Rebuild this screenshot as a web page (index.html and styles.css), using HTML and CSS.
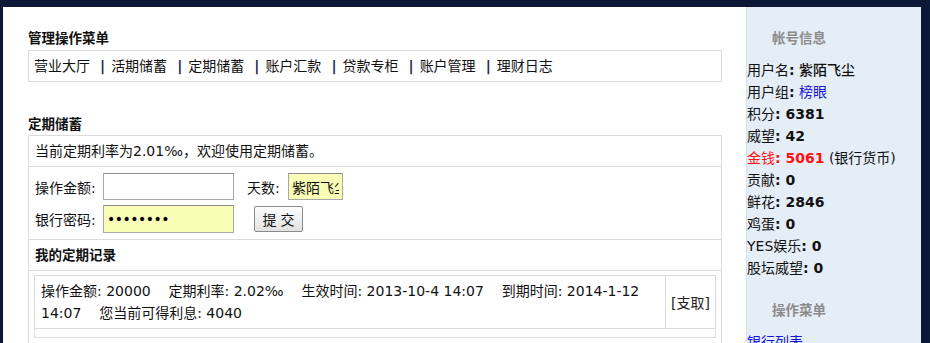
FILE: index.html
```html
<!DOCTYPE html>
<html lang="zh-CN">
<head>
<meta charset="utf-8">
<title>定期储蓄</title>
<link rel="stylesheet" href="styles.css">
</head>
<body>
<div class="page">
  <div class="main">
    <h3 class="title">管理操作菜单</h3>
    <div class="menu">
      <a>营业大厅</a><span class="sep">|</span><a>活期储蓄</a><span class="sep">|</span><a>定期储蓄</a><span class="sep">|</span><a>账户汇款</a><span class="sep">|</span><a>贷款专柜</a><span class="sep">|</span><a>账户管理</a><span class="sep">|</span><a>理财日志</a>
    </div>

    <h3 class="title title2">定期储蓄</h3>
    <div class="box">
      <div class="row notice">当前定期利率为2.01‰，欢迎使用定期储蓄。</div>
      <div class="row form">
        <div class="frow">
          <span class="lbl">操作金额:</span>
          <input class="inp" type="text" value="">
          <span class="lbl lbl2">天数:</span>
          <input class="inp inp-days yellow" type="text" value="紫陌飞尘">
        </div>
        <div class="frow frow2">
          <span class="lbl">银行密码:</span>
          <input class="inp yellow pwd" type="password" value="12345678">
          <button class="btn" type="button">提交</button>
        </div>
      </div>
      <div class="row rec-title">我的定期记录</div>
      <div class="row rec">
        <table class="rtable">
          <tr>
            <td class="rtext">操作金额: 20000&nbsp;&nbsp;&nbsp; 定期利率: 2.02‰&nbsp;&nbsp;&nbsp; 生效时间: 2013-10-4 14:07&nbsp;&nbsp;&nbsp; 到期时间: 2014-1-12 14:07&nbsp;&nbsp;&nbsp; 您当前可得利息: 4040</td>
            <td class="ract"><a>[支取]</a></td>
          </tr>
          <tr class="empty"><td colspan="2"></td></tr>
        </table>
      </div>
    </div>
  </div>

  <div class="side">
    <h4 class="stitle">帐号信息</h4>
    <ul class="info">
      <li>用户名<b>:</b> <span class="nm">紫陌飞尘</span></li>
      <li>用户组<b>:</b> <a class="link">榜眼</a></li>
      <li>积分<b>: 6381</b></li>
      <li>威望<b>: 42</b></li>
      <li class="red">金钱<b>: 5061</b> <span class="dark">(银行货币)</span></li>
      <li>贡献<b>: 0</b></li>
      <li>鲜花<b>: 2846</b></li>
      <li>鸡蛋<b>: 0</b></li>
      <li>YES娱乐<b>: 0</b></li>
      <li>股坛威望<b>: 0</b></li>
    </ul>
    <h4 class="stitle stitle2">操作菜单</h4>
    <ul class="info">
      <li><a class="link">银行列表</a></li>
    </ul>
  </div>
</div>
</body>
</html>
```

FILE: styles.css
```css
html, body {
  margin: 0;
  padding: 0;
  background: #0b1836;
}
body {
  font-family: "DejaVu Sans", "Noto Sans CJK SC", sans-serif;
  font-size: 14px;
  color: #111;
}
.page {
  display: flex;
  padding: 7px 9px 0 3px;
  height: 343px;
  box-sizing: border-box;
  overflow: hidden;
}
.main {
  width: 743px;
  flex: none;
  background: #fff;
  padding: 21px 24px 0 25px;
  box-sizing: border-box;
}
.title {
  margin: 0 0 2px;
  font-size: 13.5px;
  line-height: 20px;
  font-weight: bold;
}
.title2 {
  margin-top: 32px;
  margin-bottom: 1px;
}
.menu {
  border: 1px solid #dcdcdc;
  height: 30px;
  line-height: 30px;
  padding-left: 5px;
  white-space: nowrap;
}
.menu a { color: #111; }
.sep {
  display: inline-block;
  margin: 0 6px 0 10px;
  font-weight: bold;
  color: #1c2a55;
}
.box {
  border: 1px solid #dcdcdc;
  border-bottom: none;
  height: 220px;
}
.row {
  border-bottom: 1px solid #dcdcdc;
}
.notice {
  height: 30px;
  line-height: 30px;
  padding-left: 6px;
}
.form {
  padding: 6px 0 5px 6px;
  height: 61px;
}
.frow {
  display: flex;
  align-items: center;
  height: 27px;
}
.frow2 {
  margin-top: 5px;
  height: 28px;
}
.lbl {
  width: 68px;
  flex: none;
}
.lbl2 {
  width: 41px;
  margin-left: 13px;
}
.inp {
  box-sizing: border-box;
  width: 131px;
  height: 27px;
  border: 1px solid #a8a8a8;
  border-top-color: #8c8c8c;
  margin: 0;
  padding: 0 4px;
  font-family: "DejaVu Sans", "Noto Sans CJK SC", sans-serif;
  font-size: 14px;
  color: #111;
  background: #fff;
}
.frow2 .inp { height: 28px; }
.yellow { background: #fafdb6; }
.inp-days {
  width: 55px;
  padding: 0 3px;
}
.pwd {
  font-size: 14px;
  letter-spacing: -0.5px;
  padding-left: 3px;
  color: #000;
}
.btn {
  margin-left: 20px;
  width: 49px;
  height: 26px;
  border: 1px solid #8a8a8a;
  border-radius: 2px;
  background: linear-gradient(#fdfdfd, #e2e2e2);
  font-family: "Noto Sans CJK SC", sans-serif;
  font-size: 14px;
  letter-spacing: 4px;
  text-indent: 4px;
  color: #111;
  padding: 0;
}
.rec-title {
  height: 30px;
  line-height: 30px;
  padding-left: 6px;
  font-weight: bold;
  font-size: 13.5px;
}
.rec {
  border-bottom: none;
  padding: 4px 5px 0 5px;
}
.rtable {
  width: 100%;
  border-collapse: collapse;
  border: 1px solid #dcdcdc;
}
.rtable td {
  border: 1px solid #dcdcdc;
  padding: 0;
}
.rtext {
  padding: 4px 6px !important;
  line-height: 22px;
}
.ract {
  width: 44px;
  padding-left: 5px !important;
  text-align: left;
  vertical-align: middle;
}
.ract a { color: #222; }
.empty td { height: 8px; }

.side {
  width: 174px;
  flex: none;
  background: #e5edf7;
  border-left: 1px solid #d6e0ec;
  padding-top: 21px;
  font-size: 14px;
}
.stitle {
  margin: 0;
  padding-left: 25px;
  line-height: 20px;
  font-size: 13.5px;
  font-weight: bold;
  color: #8b8b8b;
}
.stitle2 { margin-top: 21px; }
.info {
  list-style: none;
  margin: 11px 0 0;
  padding: 0;
}
.info li {
  line-height: 22px;
  white-space: nowrap;
}
.info b { font-weight: bold; }
.info .nm { font-weight: 500; }
.link { color: #1515d8; }
.red { color: #ff1010; }
.dark { color: #111; }
```
